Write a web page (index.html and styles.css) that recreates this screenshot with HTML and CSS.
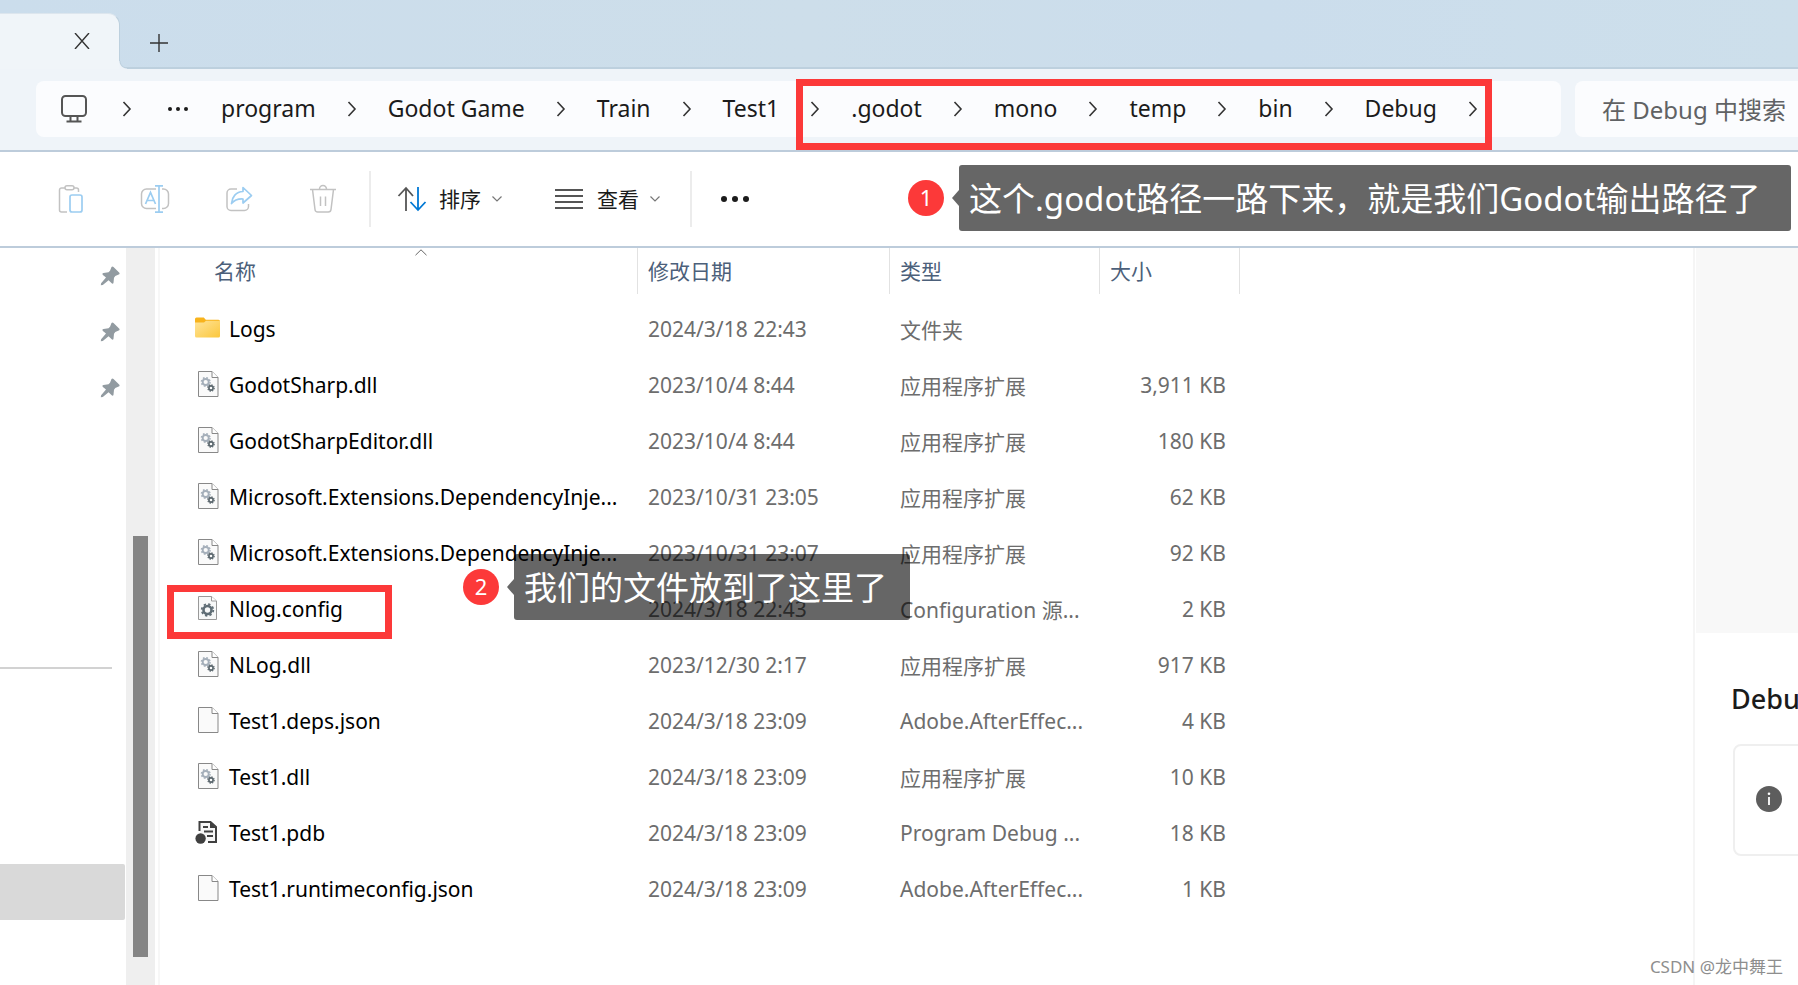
FILE: index.html
```html
<!DOCTYPE html>
<html lang="zh-CN">
<head>
<meta charset="utf-8">
<title>Debug</title>
<link rel="stylesheet" href="styles.css">
</head>
<body>
<svg class="sprite" aria-hidden="true">
  <symbol id="chevron" viewBox="0 0 10 18"><path d="M1.500 2 8 9l-6.500 7" fill="none" stroke="#333" stroke-width="1.600"/></symbol>
  <symbol id="caret" viewBox="0 0 12 8"><path d="M1.500 1.500 6 6l4.500-4.500" fill="none" stroke="#777" stroke-width="1.200"/></symbol>
  <symbol id="pin" viewBox="0 0 20 20"><path d="M11.500 1c.6-.8 1.400-.8 2 0l5.600 5.400c.8.800.6 1.700-.4 2l-3.400 1.500-1.300 1.900-.5 4.900c-.1 1-1.100 1.300-1.800.6l-3.100-3L2.800 19 .8 19.200l.3-2L6 11.500 2.900 8.900c-.8-.8-.6-1.800.6-1.900l5-.7 1.500-1.600z" fill="#929ba1"/></symbol>
  <symbol id="page" viewBox="0 0 28 28"><path d="M4.500 1.500h13.500l6 6v19H4.500z" fill="#fafafa" stroke="#888" /><path d="M18 1.500v6h6" fill="#fff" stroke="#888"/></symbol>
  <symbol id="dll" viewBox="0 0 28 28">
    <use href="#page"/>
    <circle cx="11.700" cy="12" r="3" fill="none" stroke="#a5afba" stroke-width="1.800"/>
    <circle cx="11.700" cy="12" r="4.300" fill="none" stroke="#a5afba" stroke-width="1.500" stroke-dasharray="1.700 1.677"/>
    <circle cx="17" cy="18" r="2.100" fill="none" stroke="#59656c" stroke-width="1.600"/>
    <circle cx="17" cy="18" r="3.200" fill="none" stroke="#59656c" stroke-width="1.200" stroke-dasharray="1.300 1.213"/>
  </symbol>
  <symbol id="config" viewBox="0 0 28 28">
    <path d="M4.500 2.500h13l5 4.500v18.500h-18z" fill="#f7f8f8" stroke="#999"/><path d="M17.500 2.500V7h5" fill="#fff" stroke="#999"/>
    <circle cx="13.500" cy="16" r="4" fill="none" stroke="#5f6d75" stroke-width="2.600"/>
    <circle cx="13.500" cy="16" r="5.800" fill="none" stroke="#5f6d75" stroke-width="1.800" stroke-dasharray="2.300 2.255"/>
  </symbol>
  <symbol id="pdb" viewBox="0 0 28 28">
    <path d="M5.500 13V4h11l5.500 5v15h-8" fill="#f6f6f6" stroke="#404040" stroke-width="2"/>
    <path d="M16 4v6h6z" fill="#404040"/><path d="M9 9h5M10 13.500h9M13 18h6" stroke="#404040" stroke-width="1.800"/>
    <circle cx="6.600" cy="20.500" r="5.200" fill="#404040"/>
  </symbol>
  <symbol id="folder" viewBox="0 0 28 28">
    <path d="M1 5a1.500 1.500 0 0 1 1.500-1.500h7.300l2 2.300H24.500a1.500 1.500 0 0 1 1.500 1.500V14H1z" fill="#f8b31c"/>
    <path d="M1 8.500h9l2-1.800h14V22a1.500 1.500 0 0 1-1.500 1.500h-22A1.500 1.500 0 0 1 1 22z" fill="url(#folder-fill)"/>
  </symbol>
  <linearGradient id="folder-fill" x1="0" y1="0" x2="1" y2="1"><stop offset="0" stop-color="#ffe49a"/><stop offset="1" stop-color="#fbc73c"/></linearGradient>
</svg>

<div class="window">
  <header class="tabs">
    <div class="tab">
      <button class="icon-btn tab-close" aria-label="关闭标签页"><svg width="16" height="16" viewBox="0 0 16 16"><path d="M1 0l14 16M15 0 1 16" stroke="#333" stroke-width="1.400"/></svg></button>
    </div>
    <button class="icon-btn tab-add" aria-label="新建标签页"><svg width="18" height="18" viewBox="0 0 18 18"><path d="M9 0v18M0 9h18" stroke="#333" stroke-width="1.400"/></svg></button>
  </header>

  <div class="location">
    <nav class="address" aria-label="路径">
      <button class="icon-btn" aria-label="此电脑"><svg width="28" height="30" viewBox="0 0 28 30" fill="none" stroke="#555" stroke-width="2"><rect x="2" y="2" width="24" height="20" rx="3.500"/><path d="M10.500 22v5M17.500 22v5M6.500 27.500h15"/></svg></button>
      <svg class="chev first"><use href="#chevron"/></svg>
      <button class="icon-btn more-path" aria-label="更多"><svg width="22" height="6" viewBox="0 0 22 6" fill="#1b1b1b"><circle cx="3" cy="3" r="2"/><circle cx="11" cy="3" r="2"/><circle cx="19" cy="3" r="2"/></svg></button>
      <a href="#">program</a><svg class="chev"><use href="#chevron"/></svg>
      <a href="#">Godot Game</a><svg class="chev"><use href="#chevron"/></svg>
      <a href="#">Train</a><svg class="chev"><use href="#chevron"/></svg>
      <a href="#">Test1</a>
      <div class="marked-path">
        <svg class="chev"><use href="#chevron"/></svg>
        <a href="#">.godot</a><svg class="chev"><use href="#chevron"/></svg>
        <a href="#">mono</a><svg class="chev"><use href="#chevron"/></svg>
        <a href="#">temp</a><svg class="chev"><use href="#chevron"/></svg>
        <a href="#">bin</a><svg class="chev"><use href="#chevron"/></svg>
        <a href="#">Debug</a><svg class="chev"><use href="#chevron"/></svg>
      </div>
    </nav>
    <input class="search" type="text" placeholder="在 Debug 中搜索" aria-label="搜索">
  </div>

  <div class="toolbar">
    <button class="tool" aria-label="粘贴"><svg width="30" height="30" viewBox="0 0 30 30" fill="none" stroke="#c2c2c2" stroke-width="1.500"><path d="M9 4H5.500A2 2 0 0 0 3.500 6v20a2 2 0 0 0 2 2H11M18 4h2.500a2 2 0 0 1 2 2v2"/><rect x="9" y="1.800" width="9" height="4" rx="2"/><rect x="14" y="11" width="12" height="17" rx="2" stroke="#9ccdf1" stroke-width="1.700"/></svg></button>
    <button class="tool" aria-label="重命名"><svg width="30" height="30" viewBox="0 0 30 30" fill="none" stroke="#c2c2c2" stroke-width="1.500"><path d="M16 5H6.500a5 5 0 0 0-5 5v9.500a5 5 0 0 0 5 5H16M22 5h1.500a5 5 0 0 1 5 5v9.500a5 5 0 0 1-5 5H22"/><path d="M19 2v26M15 1.800h8M15 28.200h8M5.500 20 10.500 8.500 15.500 20M7.200 16.500h6.600" stroke="#9ccdf1" stroke-width="1.700"/></svg></button>
    <button class="tool" aria-label="共享"><svg width="30" height="30" viewBox="0 0 30 30" fill="none" stroke="#c2c2c2" stroke-width="1.500" stroke-linejoin="round"><path d="M13 5H7a4 4 0 0 0-4 4v13.500a4 4 0 0 0 4 4h13.500a4 4 0 0 0 4-4V20"/><path d="M19 3.500 27.500 11.500 19 19V15C13.500 14.700 10 16.500 7.500 19.500 8 13 12 7.800 19 7.500z" stroke="#9ccdf1" stroke-width="1.700"/></svg></button>
    <button class="tool" aria-label="删除"><svg width="30" height="30" viewBox="0 0 30 30" fill="none" stroke="#c2c2c2" stroke-width="1.500"><path d="M2 5.500h26M11.500 5a3.500 3.500 0 0 1 7 0M4.500 5.500 7 25.500A2.800 2.800 0 0 0 9.800 28h10.400a2.800 2.800 0 0 0 2.800-2.500L25.500 5.500M12.500 12.500v9.500M17.500 12.500v9.500"/></svg></button>
    <span class="divider"></span>
    <button class="menu sort"><svg width="30" height="26" viewBox="0 0 30 26" fill="none" stroke-width="1.800"><path d="M9 25V2M1.500 10 9 2l7 8" stroke="#555"/><path d="M21 1v23M13.500 16 21 24l7.500-8" stroke="#0078d4"/></svg><span>排序</span><svg width="12" height="8"><use href="#caret"/></svg></button>
    <button class="menu view"><svg width="28" height="22" viewBox="0 0 28 22"><path d="M0 2h28M0 8h28M0 14h28M0 20h28" stroke="#555" stroke-width="1.800"/></svg><span>查看</span><svg width="12" height="8"><use href="#caret"/></svg></button>
    <span class="divider"></span>
    <button class="icon-btn overflow" aria-label="查看更多"><svg width="30" height="8" viewBox="0 0 30 8" fill="#1b1b1b"><circle cx="4" cy="4" r="3"/><circle cx="15" cy="4" r="3"/><circle cx="26" cy="4" r="3"/></svg></button>
  </div>

  <div class="body">
    <nav class="sidebar" aria-label="导航">
      <div class="pins">
        <svg class="pin"><use href="#pin"/></svg>
        <svg class="pin"><use href="#pin"/></svg>
        <svg class="pin"><use href="#pin"/></svg>
      </div>
      <hr class="rule">
      <div class="selected"></div>
    </nav>
    <div class="scrollbar"><div class="thumb"></div></div>
    <main class="files">
      <table class="list">
        <colgroup><col class="c-name"><col class="c-date"><col class="c-type"><col class="c-size"></colgroup>
        <thead><tr>
          <th><button class="head name">名称<svg class="sorted" viewBox="0 0 12 7"><path d="M.5 6.200 6 .8l5.500 5.400" fill="none" stroke="#666"/></svg></button></th>
          <th><button class="head">修改日期</button></th>
          <th><button class="head">类型</button></th>
          <th><button class="head">大小</button></th>
        </tr></thead>
        <tbody>
          <tr><td><div class="file"><svg class="ic"><use href="#folder"/></svg><span>Logs</span></div></td><td>2024/3/18 22:43</td><td>文件夹</td><td></td></tr>
          <tr><td><div class="file"><svg class="ic"><use href="#dll"/></svg><span>GodotSharp.dll</span></div></td><td>2023/10/4 8:44</td><td>应用程序扩展</td><td>3,911 KB</td></tr>
          <tr><td><div class="file"><svg class="ic"><use href="#dll"/></svg><span>GodotSharpEditor.dll</span></div></td><td>2023/10/4 8:44</td><td>应用程序扩展</td><td>180 KB</td></tr>
          <tr><td><div class="file"><svg class="ic"><use href="#dll"/></svg><span>Microsoft.Extensions.DependencyInje...</span></div></td><td>2023/10/31 23:05</td><td>应用程序扩展</td><td>62 KB</td></tr>
          <tr><td><div class="file"><svg class="ic"><use href="#dll"/></svg><span>Microsoft.Extensions.DependencyInje...</span></div></td><td>2023/10/31 23:07</td><td>应用程序扩展</td><td>92 KB</td></tr>
          <tr><td><div class="file marked"><svg class="ic"><use href="#config"/></svg><span>Nlog.config</span></div></td><td>2024/3/18 22:43</td><td>Configuration 源...</td><td>2 KB</td></tr>
          <tr><td><div class="file"><svg class="ic"><use href="#dll"/></svg><span>NLog.dll</span></div></td><td>2023/12/30 2:17</td><td>应用程序扩展</td><td>917 KB</td></tr>
          <tr><td><div class="file"><svg class="ic"><use href="#page"/></svg><span>Test1.deps.json</span></div></td><td>2024/3/18 23:09</td><td>Adobe.AfterEffec...</td><td>4 KB</td></tr>
          <tr><td><div class="file"><svg class="ic"><use href="#dll"/></svg><span>Test1.dll</span></div></td><td>2024/3/18 23:09</td><td>应用程序扩展</td><td>10 KB</td></tr>
          <tr><td><div class="file"><svg class="ic"><use href="#pdb"/></svg><span>Test1.pdb</span></div></td><td>2024/3/18 23:09</td><td>Program Debug ...</td><td>18 KB</td></tr>
          <tr><td><div class="file"><svg class="ic"><use href="#page"/></svg><span>Test1.runtimeconfig.json</span></div></td><td>2024/3/18 23:09</td><td>Adobe.AfterEffec...</td><td>1 KB</td></tr>
        </tbody>
      </table>
    </main>
    <aside class="details">
      <div class="preview"></div>
      <h2 class="title">Debu</h2>
      <div class="info"><svg width="26" height="26" viewBox="0 0 26 26"><circle cx="13" cy="13" r="13" fill="#5d5d5d"/><path d="M13 11v8" stroke="#fff" stroke-width="1.800"/><circle cx="13" cy="7.800" r="1.300" fill="#fff"/></svg></div>
    </aside>
  </div>

  <div class="note note-path"><span class="num">1</span><p class="bubble">这个.godot路径一路下来，就是我们Godot输出路径了</p></div>
  <div class="note note-file"><span class="num">2</span><p class="bubble">我们的文件放到了这里了</p></div>
  <div class="watermark">CSDN @龙中舞王</div>
</div>
</body>
</html>
```
FILE: styles.css
```css
*, *::before, *::after { box-sizing: border-box; }
body {
  margin: 0;
  background: #fff;
  color: #1b1b1b;
  font-family: "Noto Sans", "Noto Sans CJK SC", sans-serif;
  font-size: 21px;
}
button { border: 0; padding: 0; background: none; font: inherit; color: inherit; }
svg { display: block; flex: none; }
.sprite { position: absolute; width: 0; height: 0; }
.window { position: relative; display: flex; flex-direction: column; min-height: 100vh; overflow: hidden; }
.icon-btn { display: flex; align-items: center; justify-content: center; }

.tabs { display: flex; height: 69px; padding-top: 13px; background: linear-gradient(90deg, #cbddec, #cddeea 45%, #cbddec 70%, #cddfeb); border-bottom: 2px solid #bdd0de; }
.tab { position: relative; display: flex; justify-content: flex-end; width: 120px; height: 56px; padding: 19px 29px 0 0; background: #f0f5f9; border-top: 1px solid #dde6ee; border-right: 1px solid #bdd0de; border-radius: 0 12px 0 0; }
.tab::after { content: ""; position: absolute; left: 100%; bottom: 0; width: 8px; height: 8px; background: radial-gradient(circle at 100% 0, transparent 6px, #bdd0de 7px, #eff4f9 8px); }
.tab-close { width: 16px; height: 16px; }
.tab-add { width: 18px; height: 18px; margin: 21px 0 0 30px; }

.location { display: flex; gap: 14px; padding: 12px 0 13px 36px; background: #eff4f9; border-bottom: 2px solid #bdccdb; }
.address { display: flex; flex: 1; align-items: center; height: 56px; padding-left: 24px; background: #fbfcfe; border-radius: 8px; font-size: 23px; line-height: 30px; white-space: nowrap; }
.address a { padding-bottom: 2px; color: #1b1b1b; text-decoration: none; }
.chev { width: 10px; height: 18px; margin: 0 31px; }
.chev.first { margin: 0 35px 0 34px; }
.more-path { margin-right: 32px; }
.marked-path { position: relative; display: flex; align-items: center; }
.marked-path::after { content: ""; position: absolute; left: 17px; right: 17px; top: -14px; height: 71px; border: 7px solid #fc3939; }
.search { width: 223px; height: 56px; padding: 0 0 0 27px; border: 0; border-radius: 8px 0 0 8px; background: #fbfcfe; font: inherit; font-size: 24px; }
.search::placeholder { color: #606264; opacity: 1; }

.toolbar { display: flex; align-items: center; height: 96px; padding-left: 29px; border-bottom: 2px solid #bdccdb; }
.tool { display: flex; align-items: center; justify-content: center; width: 84px; height: 56px; }
.divider { width: 2px; height: 56px; margin-left: 4px; background: #ececec; }
.menu { display: flex; align-items: center; height: 56px; }
.menu span { margin: 0 10px 0 12px; padding-bottom: 2px; }
.sort { margin-left: 26px; }
.view { margin: 0 25px 0 52px; }
.view span { margin-left: 14px; }
.overflow { margin-left: 28px; height: 56px; }

.body { display: flex; flex: 1; }
.sidebar { width: 126px; }
.pins { display: flex; flex-direction: column; align-items: flex-end; gap: 36px; padding: 18px 6px 0 0; }
.pin { width: 20px; height: 20px; }
.rule { height: 2px; margin: 269px 14px 0 0; border: 0; background: #d2d2d2; }
.selected { height: 56px; margin: 195px 1px 0 0; background: #d9d9d9; border-radius: 0 2px 2px 0; }
.scrollbar { width: 29px; padding: 288px 7px 28px; background: #efefef; }
.thumb { height: 421px; background: #858585; }
.files { flex: 1; min-width: 0; margin-left: 3px; border-left: 2px solid #f7f7f7; border-right: 2px solid #f5f5f5; }
.list { width: 1080px; table-layout: fixed; border-collapse: collapse; }
.c-name { width: 478px; }
.c-date { width: 252px; }
.c-type { width: 210px; }
.c-size { width: 140px; }
.list th { padding: 0 0 7px; font-weight: 400; }
.head { display: block; position: relative; width: 100%; height: 46px; padding: 0 0 2px 10px; border-right: 1px solid #e2e2e2; color: #4c607a; text-align: left; }
.head.name { padding-left: 54px; }
.sorted { position: absolute; left: 255px; top: 1px; width: 12px; height: 7px; }
.list td { height: 56px; padding: 0 0 0 10px; color: #6d6d6d; white-space: nowrap; }
.list td:first-child { padding-left: 34px; color: #000; }
.list td:last-child { padding: 0 14px 0 0; text-align: right; }
.file { display: flex; align-items: center; gap: 7px; }
.ic { width: 28px; height: 28px; margin-bottom: 2px; }
.marked { position: relative; }
.marked::after { content: ""; position: absolute; left: -27px; top: -9px; width: 225px; height: 54px; border: 7px solid #fc3939; }

.details { width: 102px; margin-left: 1px; overflow: hidden; }
.preview { height: 385px; background: #f8f8f8; }
.title { margin: 46px 0 25px 35px; font-size: 27px; font-weight: 500; line-height: 40px; }
.info { display: flex; align-items: center; width: 260px; height: 112px; margin-left: 37px; padding: 0 0 2px 21px; border: 2px solid #efefef; border-radius: 8px; }

.note { position: absolute; display: flex; align-items: center; gap: 15px; color: #fff; }
.note-path { left: 908px; top: 165px; }
.note-file { left: 463px; top: 554px; }
.num { width: 36px; height: 36px; border-radius: 50%; background: #fc3939; text-align: center; font-size: 22px; line-height: 34px; }
.bubble { position: relative; margin: 0; padding: 10px 23px 8px 10px; border-radius: 3px; background: rgba(0, 0, 0, .6); font-size: 33px; line-height: 48px; white-space: nowrap; }
.note-path .bubble { padding-right: 31px; }
.bubble::before { content: ""; position: absolute; left: -7px; top: 25px; border: solid transparent; border-width: 8px 7px 8px 0; border-right-color: rgba(0, 0, 0, .6); }
.watermark { position: absolute; right: 15px; bottom: 6px; color: #8e8e8e; font-size: 17px; line-height: 24px; }
```
